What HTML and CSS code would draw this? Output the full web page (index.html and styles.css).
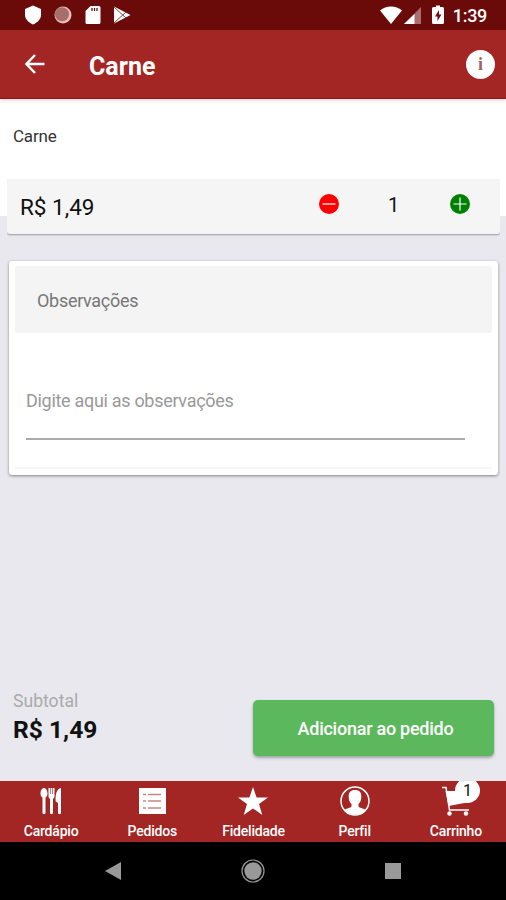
FILE: index.html
```html
<!DOCTYPE html>
<html lang="pt-BR">
<head>
    <meta charset="UTF-8">
    <meta name="viewport" content="width=device-width, initial-scale=1.0">
    <title>Carne</title>
    <link rel="stylesheet" href="styles.css">
</head>
<body>
    <!-- barra de status -->
    <div class="status-bar">
        <div class="status-left">
            <svg width="18" height="20" viewBox="0 0 18 20"><path d="M9 .5l8 3.500v6c0 4-3.500 7.500-8 9.500-4.500-2-8-5.500-8-9.500V4z" fill="#fff"/></svg>
            <svg width="19" height="20" viewBox="0 0 19 20"><circle cx="9" cy="10" r="8.500" fill="#e9bfb8"/><circle cx="8" cy="9.200" r="7" fill="#a66e6c"/></svg>
            <svg width="16" height="20" viewBox="0 0 16 20"><path d="M5.500 1H14a1.500 1.500 0 0 1 1.500 1.500v15A1.500 1.500 0 0 1 14 19H2a1.500 1.500 0 0 1-1.500-1.500V6z" fill="#fff"/><path d="M7 3v3M9.500 3v3M12 3v3" stroke="#6d0d0d" stroke-width="1.300"/></svg>
            <svg width="18" height="20" viewBox="0 0 18 20"><path d="M1 1.500L17.500 10 1 18.500z" fill="#fff"/><path d="M1 2l12 11M1 18L13 7" stroke="#8a4542" stroke-width="1"/></svg>
        </div>
        <div class="status-right">
            <svg width="22" height="18" viewBox="0 0 22 18"><path d="M0 4.500C6-.8 16-.8 22 4.500L11 18z" fill="#fff"/></svg>
            <svg class="signal" width="17" height="18" viewBox="0 0 17 18"><path d="M17 1v17H0z" fill="#a66e6c"/><path d="M10.500 7.900V18H0z" fill="#fff"/></svg>
            <svg class="battery" width="12" height="20" viewBox="0 0 12 20"><path d="M4 .5h4V2h2.500A1.500 1.500 0 0 1 12 3.500v14a1.500 1.500 0 0 1-1.500 1.500h-9A1.500 1.500 0 0 1 0 17.500v-14A1.500 1.500 0 0 1 1.500 2H4z" fill="#fff"/><path d="M7 5L3 11.500h2.500V16l4-6.500H7z" fill="#6d0d0d"/></svg>
            <span class="clock">1:39</span>
        </div>
    </div>

    <!-- cabeçalho -->
    <header class="toolbar">
        <svg width="20" height="20" viewBox="0 0 20 20"><path d="M19.500 10H1.500M10 1L1.500 10l8.500 9" fill="none" stroke="#fff" stroke-width="2.500"/></svg>
        <h1>Carne</h1>
        <button class="info">i</button>
    </header>

    <main>
        <section class="product">
            <p class="product-name">Carne</p>
            <div class="price-card">
                <span class="price">R$ 1,49</span>
                <div class="quantity">
                    <svg width="20" height="20" viewBox="0 0 20 20"><circle cx="10" cy="10" r="10" fill="#f00"/><path d="M3.500 10h13" stroke="#fff" stroke-width="1.200"/></svg>
                    <span>1</span>
                    <svg width="20" height="20" viewBox="0 0 20 20"><circle cx="10" cy="10" r="10" fill="#008000"/><path d="M3.500 10h13M10 3.500v13" stroke="#fff" stroke-width="1.200"/></svg>
                </div>
            </div>
        </section>

        <!-- observações do pedido -->
        <section class="notes">
            <h2>Observações</h2>
            <div class="notes-body">
                <div class="notes-field">Digite aqui as observações</div>
            </div>
        </section>

        <section class="summary">
            <div>
                <p class="subtotal-label">Subtotal</p>
                <p class="subtotal">R$ 1,49</p>
            </div>
            <button class="add-button">Adicionar ao pedido</button>
        </section>
    </main>

    <!-- menu inferior -->
    <nav class="tabs">
        <a class="tab">
            <svg width="30" height="32" viewBox="0 0 30 32"><g fill="#fff"><path d="M8 3c2 0 3.500 2.800 3.500 5.500 0 2-.9 3.400-2 4V28c0 1.500-3 1.500-3 0V12.500c-1.100-.6-2-2-2-4C4.500 5.800 6 3 8 3z"/><path d="M12.500 3h1.500v6h.6V3h1.800v6h.6V3h1.500v8c0 1.500-.7 2.400-1.500 2.800V28c0 1.500-3 1.500-3 0V13.800c-.8-.4-1.500-1.300-1.500-2.800z"/><path d="M25 3v25c0 1.500-3 1.500-3 0V18l-2.300-1.500C19.200 10 20.500 3.500 25 3z"/></g></svg>
            <span>Cardápio</span>
        </a>
        <a class="tab">
            <svg width="30" height="32" viewBox="0 0 30 32"><path d="M2 3h27v26H2z" fill="#fff"/><path d="M6 9.500h3M11 9.500h13M6 16h3M11 16h13M6 23h3M11 23h13" stroke="#c98583" stroke-width="1.500"/></svg>
            <span>Pedidos</span>
        </a>
        <a class="tab">
            <svg width="30" height="32" viewBox="0 0 30 32"><path d="M15 2l3.600 10.500H30l-9 6.500L24.300 30 15 23.400 5.700 30 9 19 0 12.500h11.400z" fill="#fff"/></svg>
            <span>Fidelidade</span>
        </a>
        <a class="tab">
            <svg width="30" height="32" viewBox="0 0 30 32"><circle cx="15" cy="16" r="14" fill="none" stroke="#fff" stroke-width="1.500"/><path d="M15 5c4.500 0 6.500 2.500 6.300 6.500 0 3.500-1 6-2.800 7.500v2.500c1 1.500 4.500 1.500 7 3.500-5.500 6-15.500 6-21 0 2.500-2 6-2 7-3.500V19c-1.800-1.500-2.800-4-2.800-7.500C8.500 7.500 10.500 5 15 5z" fill="#fff"/></svg>
            <span>Perfil</span>
        </a>
        <a class="tab cart">
            <svg width="30" height="32" viewBox="0 0 30 32"><path d="M1 2.500h4L8.500 25H28" fill="none" stroke="#fff" stroke-width="1.500"/><path d="M4.500 6H28l-2 11.500L7.500 21z" fill="#fff"/><circle cx="8.500" cy="28.500" r="2.200" fill="#fff"/><circle cx="25" cy="28.500" r="2.200" fill="#fff"/></svg>
            <b class="badge">1</b>
            <span>Carrinho</span>
        </a>
    </nav>

    <!-- botões do sistema -->
    <div class="system-bar">
        <svg width="16" height="18" viewBox="0 0 16 18"><path d="M16 0v18L0 9z" fill="#999"/></svg>
        <svg width="24" height="24" viewBox="0 0 24 24"><circle cx="12" cy="12" r="11" fill="none" stroke="#999" stroke-width="1.200"/><circle cx="12" cy="12" r="8.700" fill="#999"/></svg>
        <svg width="16" height="16" viewBox="0 0 16 16"><path d="M0 0h16v16H0z" fill="#999"/></svg>
    </div>
</body>
</html>
```
FILE: styles.css
```css
* {
    box-sizing: border-box;
}

body {
    margin: 0;
    height: 100vh;
    display: flex;
    flex-direction: column;
    overflow: hidden;
    font-family: Roboto, sans-serif;
    background: #e9e8ee;
    color: #111;
}

h1, h2, p {
    margin: 0;
}

svg {
    display: block;
    flex: none;
}

button {
    border: none;
    padding: 0;
    font-family: inherit;
}

/* barra de status */
.status-bar {
    height: 30px;
    flex: none;
    display: flex;
    justify-content: space-between;
    align-items: center;
    padding: 0 19px 0 24px;
    background: #6a0b09;
}

.status-left,
.status-right {
    display: flex;
    align-items: center;
}

.status-left {
    gap: 12px;
}

.signal {
    margin-left: 2px;
}

.battery {
    margin: 0 9px 0 11px;
}

.clock {
    padding-top: 2px;
    color: #fff;
    font-size: 18px;
    font-weight: 500;
    line-height: 20px;
    letter-spacing: -0.3px;
}

/* cabeçalho */
.toolbar {
    height: 69px;
    flex: none;
    display: flex;
    align-items: center;
    padding: 0 11px 0 25px;
    background: #a32624;
    border-bottom: 1px solid #8f1516;
    box-shadow: 0 1px 4px rgba(0, 0, 0, 0.2);
    z-index: 1;
}

.toolbar h1 {
    flex: 1;
    margin-left: 44px;
    padding-top: 5px;
    color: #fff;
    font-size: 25px;
    font-weight: 700;
    line-height: 30px;
}

.info {
    width: 29px;
    height: 29px;
    border-radius: 50%;
    background: #fff;
    color: #9b6461;
    font: bold 18px/29px "Liberation Serif", serif;
}

/* conteúdo */
main {
    flex: 1;
    display: flex;
    flex-direction: column;
}

.product {
    height: 117px;
    flex: none;
    padding: 26px 6px 0 7px;
    background: #fff;
}

.product-name {
    height: 54px;
    padding-left: 6px;
    font-size: 17px;
    line-height: 22px;
    letter-spacing: -0.2px;
    color: #333;
}

.price-card {
    height: 55px;
    display: flex;
    align-items: center;
    justify-content: space-between;
    padding: 0 30px 0 13px;
    border-radius: 3px;
    background: #f5f5f5;
    box-shadow: 0 1px 2px rgba(0, 0, 0, 0.35);
    clip-path: inset(0 0 -5px 0);
}

.price {
    font-size: 22.5px;
}

.quantity {
    width: 151px;
    display: flex;
    align-items: center;
    justify-content: space-between;
    padding-bottom: 5px;
    font-size: 20px;
}

.quantity span {
    padding: 2px 2px 0 0;
}

/* observações */
.notes {
    height: 214px;
    flex: none;
    margin: 45px 8px 0 9px;
    padding: 5px 6px;
    border-radius: 3px;
    background: #fff;
    box-shadow: 0 1px 3px rgba(0, 0, 0, 0.45);
}

.notes h2 {
    height: 67px;
    padding-left: 22px;
    border-radius: 3px;
    background: #f4f4f4;
    color: #777;
    font-size: 18px;
    font-weight: 400;
    line-height: 70px;
    letter-spacing: -0.3px;
}

.notes-body {
    height: 136px;
    padding: 45px 27px 0 11px;
    border-bottom: 2px solid #f7f7f7;
}

.notes-field {
    height: 62px;
    border-bottom: 2px solid #aaa;
    color: #999;
    font-size: 18px;
    line-height: 46px;
    letter-spacing: -0.3px;
}

/* resumo */
.summary {
    margin-top: auto;
    display: flex;
    justify-content: space-between;
    padding: 0 12px 25px 13px;
}

.subtotal-label {
    margin-top: -10px;
    color: #aaa;
    font-size: 17.6px;
    line-height: 22px;
}

.subtotal {
    font-size: 24.6px;
    font-weight: 700;
    line-height: 36px;
}

.add-button {
    width: 241px;
    height: 56px;
    padding: 1px 0 0 4px;
    border-radius: 5px;
    background: #5cb85c;
    box-shadow: 0 2px 3px rgba(0, 0, 0, 0.3);
    color: #fff;
    font-size: 18px;
    font-weight: 500;
    letter-spacing: -0.25px;
}

/* menu inferior */
.tabs {
    height: 61px;
    flex: none;
    display: grid;
    grid-template-columns: repeat(5, 1fr);
    background: #a32624;
}

.tab {
    position: relative;
    display: flex;
    flex-direction: column;
    align-items: center;
    padding: 4px 0 0 1px;
    color: #fff;
    font-size: 14px;
    font-weight: 500;
    line-height: 28px;
    letter-spacing: -0.2px;
}

.cart {
    overflow: hidden;
}

.badge {
    position: absolute;
    top: -3px;
    left: 50px;
    width: 25px;
    height: 25px;
    border-radius: 50%;
    background: #fff;
    color: #111;
    font-size: 16px;
    font-weight: 400;
    line-height: 26px;
    text-align: center;
}

/* botões do sistema */
.system-bar {
    height: 58px;
    flex: none;
    display: flex;
    align-items: center;
    justify-content: space-between;
    padding: 0 105px;
    background: #000;
}
```
